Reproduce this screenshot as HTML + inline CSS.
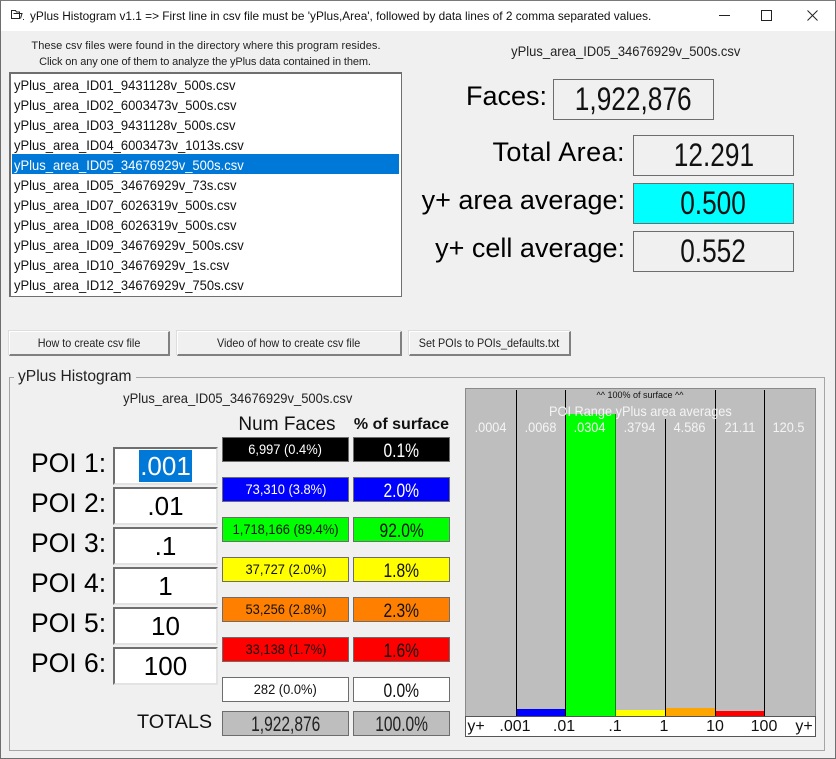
<!DOCTYPE html>
<html><head><meta charset="utf-8">
<style>
html,body{margin:0;padding:0;width:836px;height:759px;overflow:hidden;background:#f0f0f0}
body{position:relative;font-family:"Liberation Sans",sans-serif;color:#000}
div{position:absolute;box-sizing:border-box}
i{font-style:normal;display:inline-block;transform-origin:center}
.t{white-space:nowrap;text-align:center}
.l{white-space:nowrap}
.li{left:14px;width:380px;height:20px;line-height:20px;font-size:14px;white-space:nowrap;color:#111}
.li i{transform:scaleX(.928);transform-origin:left}
.fn i{transform:scaleX(.926)}
.box{border:1px solid #6d6d6d;text-align:center;white-space:nowrap;background:#f0f0f0}
.big{left:633px;width:161px;height:41px;font-size:32px;line-height:39px;color:#111}
.big i{transform:scaleX(.82)}
.lab{font-size:27px;line-height:34px;white-space:nowrap;text-align:right;right:211px}
.btn{top:331px;height:25px;background:#f0f0f0;border-right:2px solid #808080;border-bottom:2px solid #808080;border-top:1px solid #fff;border-left:1px solid #fff;font-size:12px;line-height:22px;text-align:center;white-space:nowrap;color:#222;box-shadow:-1px -1px 0 #ddd}
.btn i{transform:scaleX(.9)}
.poil{left:31px;font-size:26.500px;line-height:34px;white-space:nowrap}
.poi{left:113px;width:105px;height:38px;background:#fff;border-top:2px solid #6f6f6f;border-left:2px solid #6f6f6f;border-bottom:2px solid #e3e3e3;border-right:2px solid #e3e3e3;text-align:center;font-size:26px;line-height:34px;white-space:nowrap}
.c1{left:222px;width:127px;height:25px;font-size:14px;line-height:22px}
.c1 i{transform:scaleX(.92)}
.c2{left:353px;width:97px;height:25px;font-size:19.500px;line-height:26px}
.c2 i{transform:scaleX(.8)}
.tot{font-size:21px;line-height:26px;color:#222}
.tot i{transform:scaleX(.74)}
.vl{width:1px;background:#000}
.val{top:418px;width:50px;text-align:center;color:#f4f4f4;font-size:14px;line-height:18px;white-space:nowrap}
.val i{transform:scaleX(.91)}
.ax{top:717px;font-size:16px;line-height:19px;white-space:nowrap;text-align:center;width:50px;color:#111}
</style></head><body>
<!-- window frame -->
<div style="left:0;top:0;width:836px;height:759px;border:1px solid #6e6e6e;border-top-color:#7a7a7a"></div>
<div style="left:1px;top:1px;width:834px;height:30px;background:#fff"></div>
<svg style="position:absolute;left:11px;top:9px" width="14" height="13" viewBox="0 0 14 13" fill="none" stroke="#222" stroke-width="1"><path d="M.5 1.500h4l1 1.500h3v6.500h-8z"/><path d="M2.500 4.500h8.500l-1.500 5"/><path d="M12 10.500h1"/></svg>
<div class="l" style="left:30px;top:8px;font-size:11.850px;line-height:16px;color:#111">yPlus Histogram v1.1 =&gt; First line in csv file must be 'yPlus,Area', followed by data lines of 2 comma separated values.</div>
<div style="left:719px;top:15px;width:11px;height:1px;background:#222"></div>
<div style="left:761px;top:10px;width:11px;height:11px;border:1px solid #222"></div>
<svg style="position:absolute;left:807px;top:10px" width="12" height="12" viewBox="0 0 12 12" stroke="#222" stroke-width="1" fill="none"><path d="M.5 .5l10 10M10.500 .5l-10 10"/></svg>

<div class="t" style="left:10px;width:392px;top:39px;font-size:11px;line-height:14px;color:#222;letter-spacing:.07px">These csv files were found in the directory where this program resides.</div>
<div class="t" style="left:9px;width:392px;top:55px;font-size:11px;line-height:14px;color:#222;letter-spacing:-.12px">Click on any one of them to analyze the yPlus data contained in them.</div>

<!-- list -->
<div style="left:9px;top:72px;width:393px;height:225px;background:#fff;border-top:2px solid #6f6f6f;border-left:2px solid #6f6f6f;border-right:1px solid #6f6f6f;border-bottom:1px solid #6f6f6f"></div>
<div style="left:12px;top:154px;width:387px;height:20px;background:#0078d7"></div>
<div class="li" style="top:75px"><i>yPlus_area_ID01_9431128v_500s.csv</i></div>
<div class="li" style="top:95px"><i>yPlus_area_ID02_6003473v_500s.csv</i></div>
<div class="li" style="top:115px"><i>yPlus_area_ID03_9431128v_500s.csv</i></div>
<div class="li" style="top:135px"><i>yPlus_area_ID04_6003473v_1013s.csv</i></div>
<div class="li" style="top:155px;color:#fff"><i>yPlus_area_ID05_34676929v_500s.csv</i></div>
<div class="li" style="top:175px"><i>yPlus_area_ID05_34676929v_73s.csv</i></div>
<div class="li" style="top:195px"><i>yPlus_area_ID07_6026319v_500s.csv</i></div>
<div class="li" style="top:215px"><i>yPlus_area_ID08_6026319v_500s.csv</i></div>
<div class="li" style="top:235px"><i>yPlus_area_ID09_34676929v_500s.csv</i></div>
<div class="li" style="top:255px"><i>yPlus_area_ID10_34676929v_1s.csv</i></div>
<div class="li" style="top:275px"><i>yPlus_area_ID12_34676929v_750s.csv</i></div>

<!-- stats -->
<div class="t fn" style="left:480px;width:292px;top:42px;font-size:14px;line-height:18px;color:#222"><i>yPlus_area_ID05_34676929v_500s.csv</i></div>
<div class="lab" style="top:79px;right:289px">Faces:</div>
<div class="box big" style="left:553px;top:79px"><i>1,922,876</i></div>
<div class="lab" style="top:135px;letter-spacing:.45px">Total Area:</div>
<div class="box big" style="top:135px"><i>12.291</i></div>
<div class="lab" style="top:183px">y+ area average:</div>
<div class="box big" style="top:183px;background:#00ffff"><i>0.500</i></div>
<div class="lab" style="top:231px">y+ cell average:</div>
<div class="box big" style="top:231px"><i>0.552</i></div>

<!-- buttons -->
<div class="btn" style="left:9px;width:161px"><i>How to create csv file</i></div>
<div class="btn" style="left:177px;width:225px"><i>Video of how to create csv file</i></div>
<div class="btn" style="left:409px;width:162px"><i>Set POIs to POIs_defaults.txt</i></div>

<!-- group -->
<div style="left:9px;top:377px;width:816px;height:374px;border:1px solid #a5a5a5"></div>
<div class="l" style="left:14px;top:367px;padding:0 4px;background:#f0f0f0;font-size:15.600px;line-height:19px;color:#222">yPlus Histogram</div>
<div class="t fn" style="left:92px;width:292px;top:389px;font-size:14px;line-height:18px;color:#222"><i>yPlus_area_ID05_34676929v_500s.csv</i></div>
<div class="t" style="left:222px;width:130px;top:413px;font-size:19px;line-height:24px;color:#111">Num Faces</div>
<div class="t" style="left:353px;width:97px;top:414px;font-size:16px;line-height:22px;font-weight:bold;color:#111">% of surface</div>

<!-- POIs -->
<div class="poil" style="top:446px">POI 1:</div>
<div class="poil" style="top:486px">POI 2:</div>
<div class="poil" style="top:526px">POI 3:</div>
<div class="poil" style="top:566px">POI 4:</div>
<div class="poil" style="top:606px">POI 5:</div>
<div class="poil" style="top:646px">POI 6:</div>
<div class="poi" style="top:447px"><span style="background:#0078d7;color:#fff;display:inline-block;line-height:32px;height:32px;vertical-align:top;margin-top:1px;padding:0 1px">.001</span></div>
<div class="poi" style="top:487px">.01</div>
<div class="poi" style="top:527px">.1</div>
<div class="poi" style="top:567px">1</div>
<div class="poi" style="top:607px">10</div>
<div class="poi" style="top:647px">100</div>

<!-- table -->
<div class="box c1" style="top:437px;background:#000;color:#fff"><i>6,997 (0.4%)</i></div>
<div class="box c2" style="top:437px;background:#000;color:#fff"><i>0.1%</i></div>
<div class="box c1" style="top:477px;background:#0000ff;color:#fff"><i>73,310 (3.8%)</i></div>
<div class="box c2" style="top:477px;background:#0000ff;color:#fff"><i>2.0%</i></div>
<div class="box c1" style="top:517px;background:#00ff00;color:#111"><i>1,718,166 (89.4%)</i></div>
<div class="box c2" style="top:517px;background:#00ff00;color:#111"><i>92.0%</i></div>
<div class="box c1" style="top:557px;background:#ffff00;color:#111"><i>37,727 (2.0%)</i></div>
<div class="box c2" style="top:557px;background:#ffff00;color:#111"><i>1.8%</i></div>
<div class="box c1" style="top:597px;background:#ff8000;color:#111"><i>53,256 (2.8%)</i></div>
<div class="box c2" style="top:597px;background:#ff8000;color:#111"><i>2.3%</i></div>
<div class="box c1" style="top:637px;background:#ff0000;color:#111"><i>33,138 (1.7%)</i></div>
<div class="box c2" style="top:637px;background:#ff0000;color:#111"><i>1.6%</i></div>
<div class="box c1" style="top:677px;background:#fff;color:#111"><i>282 (0.0%)</i></div>
<div class="box c2" style="top:677px;background:#fff;color:#111"><i>0.0%</i></div>
<div class="l" style="left:137px;top:711px;font-size:19.800px;line-height:22px;color:#111">TOTALS</div>
<div class="box c1 tot" style="top:711px;background:#bebebe"><i>1,922,876</i></div>
<div class="box c2 tot" style="top:711px;background:#bebebe"><i>100.0%</i></div>

<!-- chart -->
<div style="left:465px;top:388px;width:351px;height:349px;background:#bebebe;border:1px solid #8a8a8a"></div>
<div style="left:566px;top:414px;width:50px;height:302px;background:#00ff00"></div>
<div style="left:517px;top:709px;width:49px;height:7px;background:#0000ff"></div>
<div style="left:616px;top:710px;width:49px;height:6px;background:#ffff00"></div>
<div style="left:666px;top:708px;width:49px;height:8px;background:#ffa500"></div>
<div style="left:716px;top:711px;width:48px;height:5px;background:#ff0000"></div>
<div class="vl" style="left:516px;top:390px;height:326px"></div>
<div class="vl" style="left:565px;top:390px;height:326px"></div>
<div class="vl" style="left:615px;top:414px;height:302px;opacity:.45"></div>
<div class="vl" style="left:665px;top:419px;height:297px"></div>
<div class="vl" style="left:715px;top:390px;height:326px"></div>
<div class="vl" style="left:764px;top:390px;height:326px"></div>
<div class="t" style="left:540px;width:200px;top:389px;font-size:9px;line-height:12px;color:#111">^^ 100% of surface ^^</div>
<div class="t" style="left:500px;width:280px;top:402px;font-size:14px;line-height:18px;color:#f4f4f4"><i style="transform:scaleX(.91)">POI Range yPlus area averages</i></div>
<div class="val" style="left:466px"><i>.0004</i></div>
<div class="val" style="left:516px"><i>.0068</i></div>
<div class="val" style="left:565px"><i>.0304</i></div>
<div class="val" style="left:615px"><i>.3794</i></div>
<div class="val" style="left:665px"><i>4.586</i></div>
<div class="val" style="left:715px"><i>21.11</i></div>
<div class="val" style="left:764px"><i>120.5</i></div>
<div style="left:465px;top:716px;width:351px;height:21px;background:#fff;border:1px solid #555"></div>
<div class="ax" style="left:451px">y+</div>
<div class="ax" style="left:490px">.001</div>
<div class="ax" style="left:539px">.01</div>
<div class="ax" style="left:590px">.1</div>
<div class="ax" style="left:639px">1</div>
<div class="ax" style="left:690px">10</div>
<div class="ax" style="left:739px">100</div>
<div class="ax" style="left:779px">y+</div>
</body></html>
